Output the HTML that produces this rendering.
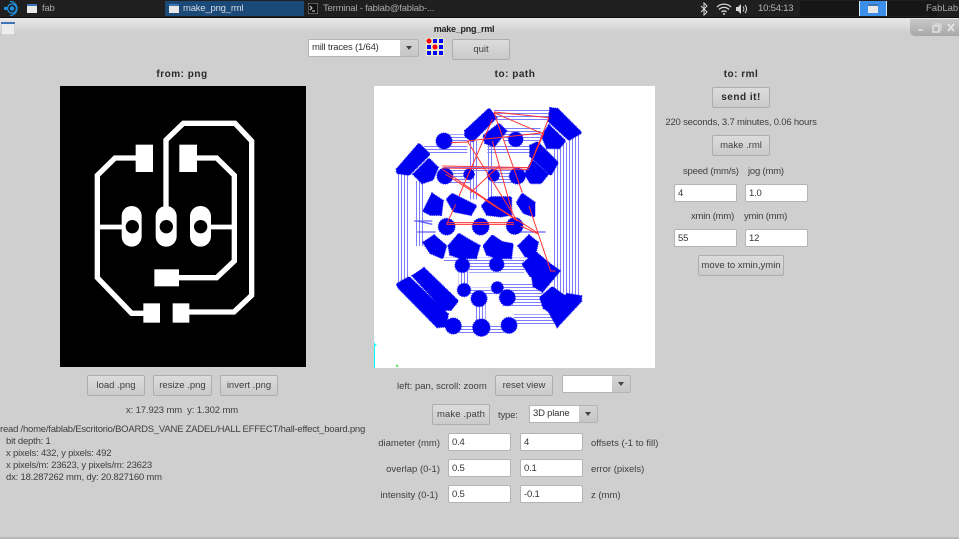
<!DOCTYPE html>
<html><head><meta charset="utf-8"><style>
html,body{margin:0;padding:0;width:959px;height:539px;overflow:hidden;background:#cfcfcf}
body{position:relative;font-family:"Liberation Sans",sans-serif;font-size:9.500px;letter-spacing:-.2px;color:#3f3f3f}
.t{position:absolute;white-space:nowrap;line-height:12px;height:12px;margin-top:2px}
.h{font-size:10px;font-weight:bold;color:#2a2a2a;letter-spacing:.5px}
.l{letter-spacing:0}
.c{transform:translateX(-50%)}
.r{transform:translateX(-100%)}
.b{position:absolute;box-sizing:border-box;border:1px solid #adadad;border-radius:2px;background:linear-gradient(#dcdcdc,#cacaca);text-align:center;color:#3f3f3f;line-height:20px;height:21px;white-space:nowrap;letter-spacing:0}
.i{position:absolute;box-sizing:border-box;width:63px;height:18px;background:#fff;border:1px solid #b4b4b4;border-radius:2px;line-height:17px;padding-left:3px;color:#333}
.d{position:absolute;box-sizing:border-box;height:18px;border:1px solid #b4b4b4;border-radius:2px;background:linear-gradient(#d4d4d4,#c6c6c6)}
.d i{position:absolute;left:0;top:0;bottom:0;background:#fff;font-style:normal;line-height:16px;padding-left:3px;color:#333;box-sizing:border-box}
.d u{position:absolute;top:6px;width:0;height:0;border-left:3.500px solid transparent;border-right:3.500px solid transparent;border-top:4px solid #444}
.tb{color:#a9a9a9;position:absolute;top:2px;line-height:14px}
</style></head><body>
<!-- taskbar -->
<div style="position:absolute;left:0;top:0;width:959px;height:17px;background:#1f1f1f"></div>
<div style="position:absolute;left:0;top:17px;width:959px;height:1px;background:#0c0c0c"></div>
<svg style="position:absolute;left:2px;top:0" width="16" height="17" viewBox="0 0 16 17"><circle cx="10" cy="8.500" r="2.200" fill="#1f8fe0"/><circle cx="10" cy="8.500" r="4.500" fill="none" stroke="#1f8fe0" stroke-width="1.300"/><path d="M8 1.500A7 7 0 0 1 8 15.500" fill="none" stroke="#1f8fe0" stroke-width="1.300"/><rect x="2" y="7" width="3" height="3" fill="#1f8fe0"/></svg>
<svg style="position:absolute;left:27px;top:4px" width="10" height="9"><rect width="10" height="9" fill="#e8e8e8"/><rect width="10" height="2" fill="#3f74b4"/></svg>
<div class="tb" style="left:42px">fab</div>
<div style="position:absolute;left:165px;top:1px;width:139px;height:15px;background:#1c4a78"></div>
<svg style="position:absolute;left:169px;top:4px" width="10" height="9"><rect width="10" height="9" fill="#e8e8e8"/><rect width="10" height="2" fill="#3f74b4"/></svg>
<div class="tb" style="left:183px;color:#d6dde4">make_png_rml</div>
<svg style="position:absolute;left:308px;top:3px" width="10" height="11"><rect width="10" height="11" fill="#111" stroke="#999" stroke-width="1"/><path d="M2 3l2 2-2 2M4 8h3" stroke="#ddd" fill="none"/></svg>
<div class="tb" style="left:323px">Terminal - fablab@fablab-...</div>
<svg style="position:absolute;left:700px;top:2px" width="50" height="14" viewBox="0 0 50 14" fill="none" stroke="#d8d8d8"><path d="M1 4l6 6-3 3V1l3 3-6 6" stroke-width="1"/><path d="M17 5a10 10 0 0 1 14 0M19 7.500a7 7 0 0 1 10 0M21.500 10a3.500 3.500 0 0 1 5 0" stroke-width="1.300"/><circle cx="24" cy="12" r="1" fill="#d8d8d8" stroke="none"/><path d="M36 5h2l3-3v10l-3-3h-2z" fill="#d8d8d8" stroke="none"/><path d="M43 4.500a4 4 0 0 1 0 5M45 3a6 6 0 0 1 0 8"/></svg>
<div class="tb" style="left:758px;color:#b5b5b5">10:54:13</div>
<div style="position:absolute;left:800px;top:1px;width:137px;height:15px;background:#161616"></div>
<div style="position:absolute;left:859px;top:1px;width:28px;height:15px;background:#3c8fe8;box-sizing:border-box;border:1px solid #d8e8f8;border-width:0 1px"></div>
<svg style="position:absolute;left:868px;top:4px" width="10" height="9"><rect width="10" height="9" fill="#e8e8e8"/><rect width="10" height="2" fill="#3f74b4"/></svg>
<div class="tb" style="left:926px;letter-spacing:0">FabLab</div>
<!-- title -->
<div style="position:absolute;left:0;top:18px;width:959px;height:15px;background:linear-gradient(#e9e9e9,#cfcfcf)"></div>
<svg style="position:absolute;left:1px;top:22px" width="14" height="13"><rect width="14" height="13" rx="1" fill="#ececec" stroke="#bbb"/><rect width="14" height="2" fill="#3f74b4"/></svg>
<div class="t c" style="left:464px;top:21px;font-weight:bold;color:#222;font-size:9px;letter-spacing:-.25px">make_png_rml</div>
<div style="position:absolute;left:910px;top:19px;width:49px;height:17px;background:linear-gradient(#c8c8c8,#a8a8a8);border-bottom-left-radius:5px"></div>
<svg style="position:absolute;left:914px;top:22px" width="45" height="12" fill="none" stroke="#e2e2e2" stroke-width="1.500"><path d="M4 8h5"/><rect x="19" y="4" width="6" height="6"/><path d="M21 4V2h6v6h-2" stroke-width="1"/><path d="M34 2l6 7M40 2l-6 7" stroke-width="2"/></svg>
<!-- top controls -->
<div class="d" style="left:308px;top:39px;width:111px"><i style="width:91px">mill traces (1/64)</i><u style="left:97px"></u></div>
<svg style="position:absolute;left:426px;top:38px" width="18" height="18"><rect width="18" height="18" fill="#e9e9c9"/><g fill="#00f"><rect x="7" y="1" width="4" height="4"/><rect x="13" y="1" width="4" height="4"/><rect x="1" y="7" width="4" height="4"/><rect x="13" y="7" width="4" height="4"/><rect x="1" y="13" width="4" height="4"/><rect x="7" y="13" width="4" height="4"/><rect x="13" y="13" width="4" height="4"/></g><circle cx="3" cy="3" r="2.500" fill="#f00"/><circle cx="9" cy="9" r="2.500" fill="#f00"/></svg>
<div class="b" style="left:452px;top:39px;width:58px">quit</div>
<div class="t c h" style="left:182px;top:67px">from: png</div>
<div class="t c h" style="left:515px;top:67px">to: path</div>
<div class="t c h" style="left:741px;top:67px">to: rml</div>
<!-- png -->
<svg style="position:absolute;left:60px;top:86px" width="246" height="281" viewBox="0 0 738 843"><rect width="738" height="843" fill="#000"/>
<g fill="none" stroke="#fff" stroke-width="16" stroke-linejoin="miter"><path d="M230 216H165L112 268V575L215 682H255"/><path d="M318 370V162L370 112H525L575 165V628L522 678H385"/><path d="M405 216H470L523 268V525L470 575H350"/><path d="M112 423H190M450 423H523" stroke-width="14"/></g>
<g fill="#fff"><rect x="227" y="176" width="52" height="82"/><rect x="358" y="176" width="53" height="82"/><rect x="283" y="550" width="74" height="51"/><rect x="250" y="652" width="50" height="58"/><rect x="338" y="652" width="50" height="58"/><rect x="185" y="360" width="60" height="122" rx="30"/><rect x="287" y="360" width="63" height="122" rx="31"/><rect x="390" y="360" width="63" height="122" rx="31"/></g>
<g fill="#000"><circle cx="217" cy="422" r="20"/><circle cx="319" cy="422" r="20"/><circle cx="422" cy="422" r="20"/></g></svg>
<!-- path -->
<svg style="position:absolute;left:374px;top:86px" width="282" height="282" viewBox="0 0 846 846">
<defs><pattern id="v" width="9" height="9" patternUnits="userSpaceOnUse"><rect width="3" height="9" fill="#7d7dff"/></pattern><pattern id="h" width="9" height="9" patternUnits="userSpaceOnUse"><rect width="9" height="3" fill="#7d7dff"/></pattern>
<g id="bl"><path d="M275 135L345 70 365 95 295 165 275 150zM530 68L550 70 620 140 585 160 525 105zM525 120L572 165 555 185 520 185 505 150zM330 150L375 115 395 135 360 180 335 170zM70 250L135 175 165 205 105 265 70 260zM120 265L165 220 190 245 175 280 145 290zM470 180L490 170 550 230 530 265 470 210zM455 265L475 225 520 265 500 290 470 290zM150 375L175 325 205 345 200 385 170 385zM220 340L235 325 305 360 290 385 240 375zM325 360L350 335 410 335 410 385 380 390 340 385zM430 350L445 325 480 350 480 390 450 380zM150 470L180 450 215 480 205 515 170 500zM225 480L255 445 280 460 315 480 305 515 260 515 230 505zM330 480L355 450 385 470 415 475 410 515 370 515 340 505zM435 480L465 450 490 470 480 515 455 510zM447 535L485 500 520 530 470 570zM475 570L520 530 555 555 505 615 480 600zM500 635L535 605 570 630 525 675 510 665zM525 675L580 625 620 632 620 645 550 720zM70 595L105 575 220 685 215 720 190 722 75 605zM118 570L150 548 250 645 230 670 210 670z"/>
<circle cx="210" cy="165" r="21"/><circle cx="425" cy="160" r="19"/><circle cx="213" cy="270" r="21"/><circle cx="285" cy="265" r="13"/><circle cx="358" cy="268" r="15"/><circle cx="430" cy="270" r="21"/><circle cx="218" cy="422" r="22"/><circle cx="320" cy="422" r="22"/><circle cx="422" cy="420" r="22"/><circle cx="265" cy="538" r="19"/><circle cx="368" cy="535" r="19"/><circle cx="270" cy="612" r="17"/><circle cx="315" cy="638" r="21"/><circle cx="370" cy="605" r="15"/><circle cx="400" cy="635" r="21"/><circle cx="238" cy="720" r="21"/><circle cx="322" cy="725" r="23"/><circle cx="405" cy="718" r="21"/></g></defs>
<rect width="843" height="846" fill="#fff"/>
<g fill="url(#v)"><rect x="72" y="255" width="36" height="335"/><rect x="124" y="285" width="27" height="195"/><rect x="284" y="165" width="27" height="175"/><rect x="340" y="170" width="18" height="170"/><rect x="585" y="140" width="31" height="490"/><rect x="540" y="170" width="45" height="450"/><rect x="254" y="555" width="30" height="55"/><rect x="305" y="650" width="30" height="70"/></g>
<g fill="url(#h)"><rect x="360" y="72" width="170" height="30"/><rect x="390" y="120" width="110" height="45"/><rect x="225" y="145" width="55" height="20"/><rect x="150" y="177" width="130" height="30"/><rect x="340" y="177" width="135" height="30"/><rect x="210" y="240" width="250" height="15"/><rect x="215" y="255" width="75" height="36"/><rect x="360" y="255" width="70" height="36"/><rect x="210" y="515" width="240" height="15"/><rect x="285" y="530" width="165" height="30"/><rect x="250" y="605" width="120" height="22"/><rect x="385" y="590" width="120" height="72"/><rect x="420" y="685" width="120" height="32"/><rect x="255" y="720" width="135" height="22"/></g>
<g fill="#0000f0" stroke="#4040f8" stroke-width="10" stroke-dasharray="3 3"><use href="#bl"/></g>
<g fill="#0000f0" stroke="#0000f0" stroke-width="6" stroke-linejoin="round"><use href="#bl"/></g>
<path d="M130 405L175 415M120 405H175M130 438H185M440 438H515" fill="none" stroke="#6060ff" stroke-width="4"/>
<g fill="none" stroke="#ff3535" stroke-width="3"><path d="M360 78L525 95M360 80L510 145M525 95L465 245M510 140L465 245M465 245L205 240M205 246L465 250M205 250L430 405M215 265L490 440M355 100L255 330M510 140L280 165M280 165L430 405M230 170L285 168M360 80L445 320M355 165L415 380M375 240L290 320M245 355L218 415M218 410H420M218 415H420M465 360L530 555H545M330 340L425 400M440 420L495 445"/></g>
<g fill="#00ffff"><rect x="0" y="770" width="3" height="76"/><path d="M0 772l9 5-9 5z"/></g><path d="M66 834l9 8H66z" fill="#40e040"/>
</svg>
<!-- png buttons -->
<div class="b" style="left:87px;top:375px;width:58px">load .png</div>
<div class="b" style="left:153px;top:375px;width:59px">resize .png</div>
<div class="b" style="left:220px;top:375px;width:58px">invert .png</div>
<div class="t c" style="left:182px;top:403px;letter-spacing:-.12px">x: 17.923 mm&nbsp; y: 1.302 mm</div>
<div class="t" style="left:0;top:422px;letter-spacing:-.22px">read /home/fablab/Escritorio/BOARDS_VANE ZADEL/HALL EFFECT/hall-effect_board.png</div>
<div class="t" style="left:6px;top:434px">bit depth: 1</div>
<div class="t" style="left:6px;top:446px">x pixels: 432, y pixels: 492</div>
<div class="t" style="left:6px;top:458px">x pixels/m: 23623, y pixels/m: 23623</div>
<div class="t" style="left:6px;top:470px">dx: 18.287262 mm, dy: 20.827160 mm</div>
<!-- path controls -->
<div class="t l" style="left:397px;top:379px">left: pan, scroll: zoom</div>
<div class="b" style="left:495px;top:375px;width:58px">reset view</div>
<div class="d" style="left:562px;top:375px;width:69px"><i style="width:49px"></i><u style="left:55px"></u></div>
<div class="b" style="left:432px;top:404px;width:58px;letter-spacing:.1px">make .path</div>
<div class="t" style="left:498px;top:408px">type:</div>
<div class="d" style="left:529px;top:405px;width:69px"><i style="width:49px">3D plane</i><u style="left:55px"></u></div>
<div class="t r l" style="left:440px;top:436px">diameter (mm)</div>
<div class="i" style="left:448px;top:433px">0.4</div><div class="i" style="left:520px;top:433px">4</div>
<div class="t l" style="left:591px;top:436px">offsets (-1 to fill)</div>
<div class="t r l" style="left:440px;top:462px">overlap (0-1)</div>
<div class="i" style="left:448px;top:459px">0.5</div><div class="i" style="left:520px;top:459px">0.1</div>
<div class="t l" style="left:591px;top:462px">error (pixels)</div>
<div class="t r l" style="left:438px;top:488px">intensity (0-1)</div>
<div class="i" style="left:448px;top:485px">0.5</div><div class="i" style="left:520px;top:485px">-0.1</div>
<div class="t l" style="left:591px;top:488px">z (mm)</div>
<!-- rml -->
<div class="b" style="left:712px;top:87px;width:58px;font-weight:bold;font-size:10px;color:#2a2a2a;letter-spacing:.5px">send it!</div>
<div class="t c" style="left:741px;top:115px">220 seconds, 3.7 minutes, 0.06 hours</div>
<div class="b" style="left:712px;top:135px;width:58px">make .rml</div>
<div class="t" style="left:683px;top:164px">speed (mm/s)</div><div class="t" style="left:748px;top:164px">jog (mm)</div>
<div class="i" style="left:674px;top:184px">4</div><div class="i" style="left:745px;top:184px">1.0</div>
<div class="t" style="left:691px;top:209px">xmin (mm)</div><div class="t" style="left:744px;top:209px">ymin (mm)</div>
<div class="i" style="left:674px;top:229px">55</div><div class="i" style="left:745px;top:229px">12</div>
<div class="b" style="left:698px;top:255px;width:86px">move to xmin,ymin</div>
<div style="position:absolute;left:0;top:537px;width:959px;height:2px;background:#b9b9b9"></div>
</body></html>
